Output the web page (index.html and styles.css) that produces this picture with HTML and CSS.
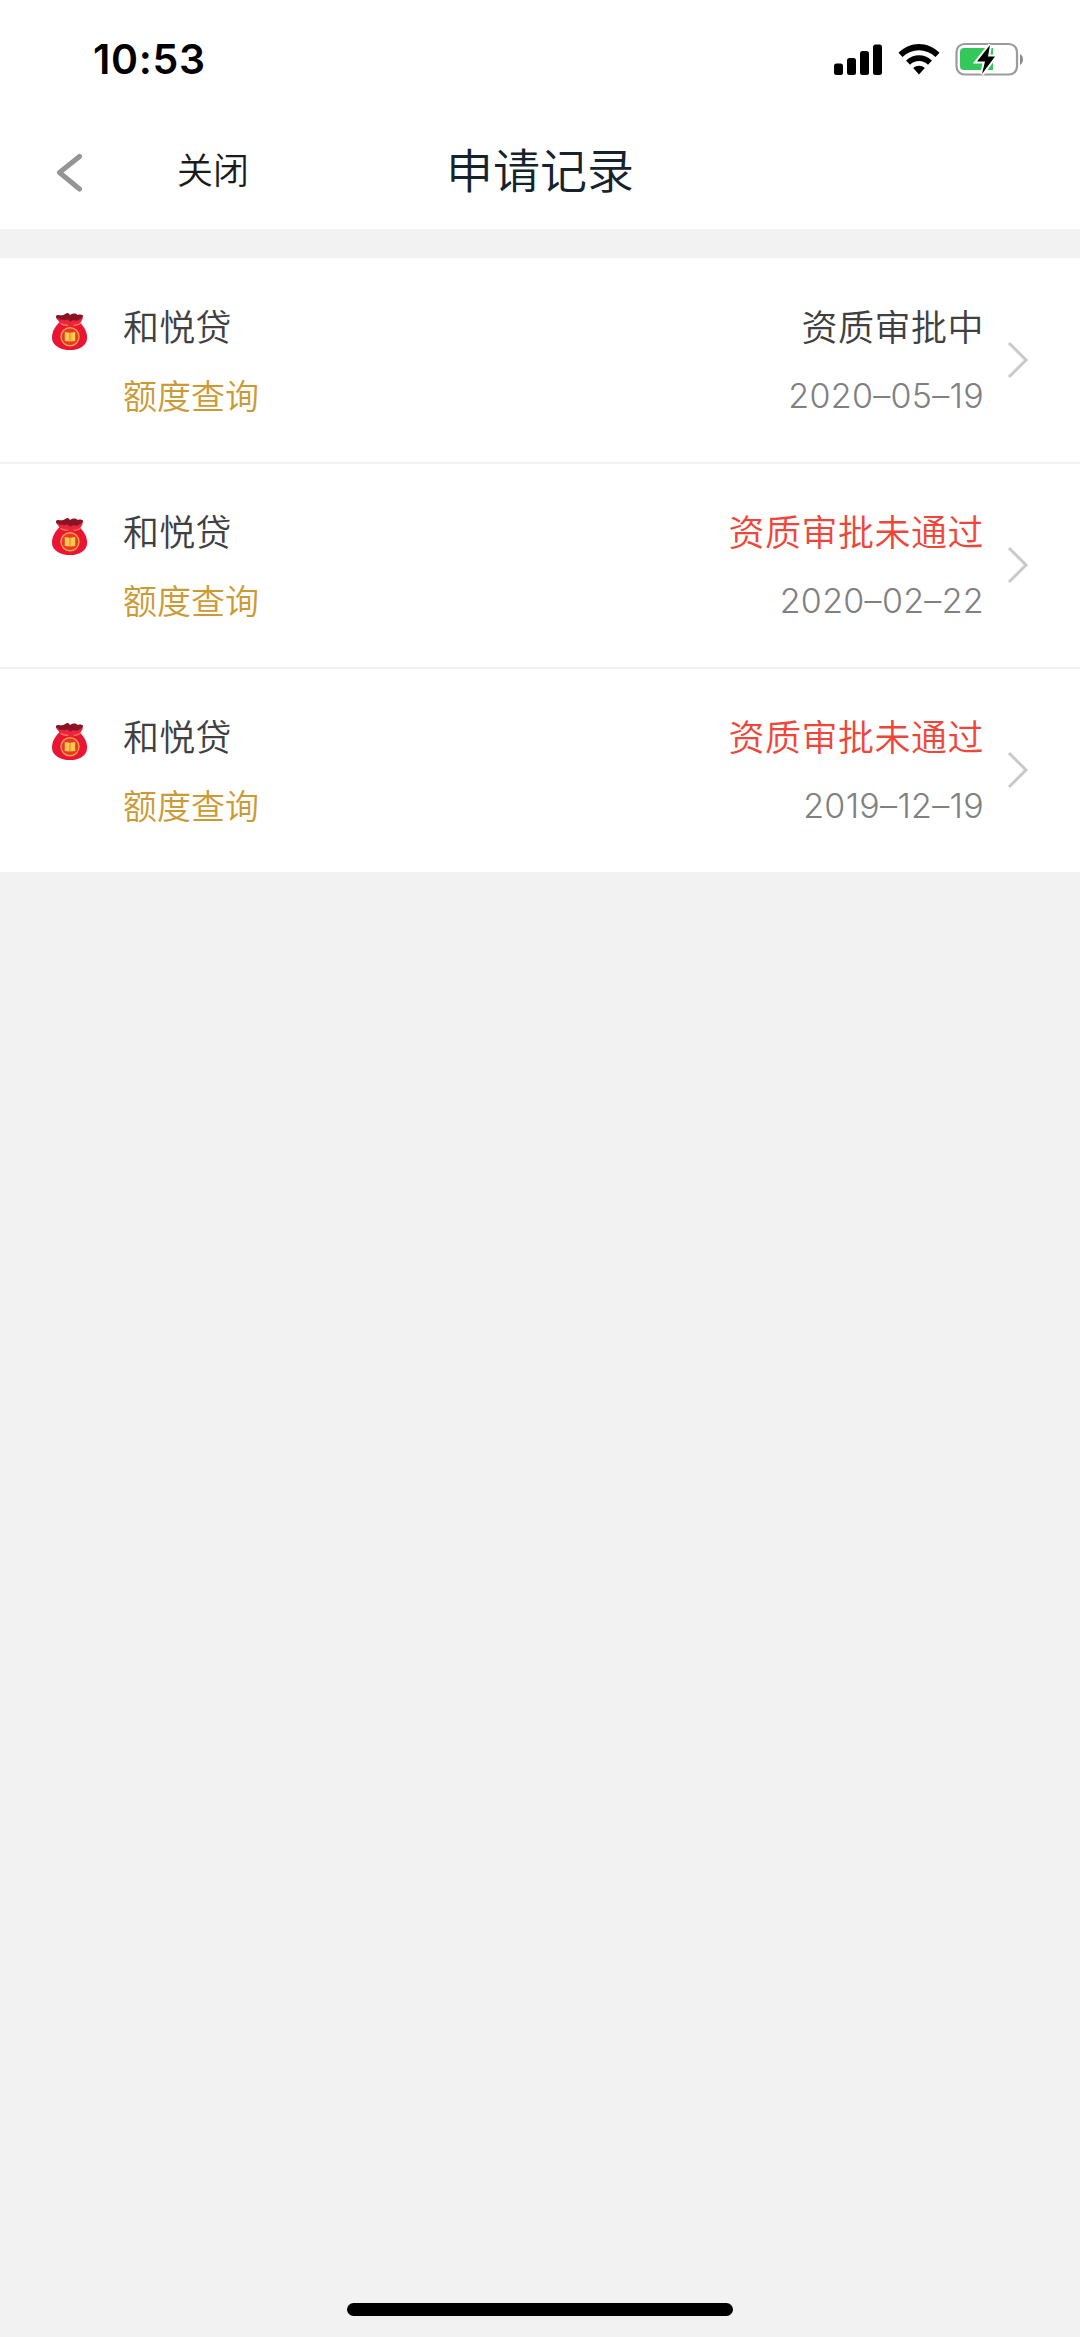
FILE: index.html
```html
<!DOCTYPE html>
<html lang="zh-CN">
<head>
<meta charset="utf-8">
<title>申请记录</title>
<link rel="stylesheet" href="styles.css">
</head>
<body>
<svg class="defs" aria-hidden="true">
  <symbol id="bag" viewBox="0 0 40 44">
    <path d="M10 11C4 16 1 22 1 28c0 8 9 13 19 13s18-5 18-13c0-6-3-12-9-17z" fill="#ea1535"/>
    <path d="M7 9C4 6 5 4 8 4c3 1 5 0 7-1 2-2 4-1 5 1 3-2 6-2 8 0 3-1 5 0 6 1-1 3-3 5-5 6-7 2-14 2-19 0z" fill="#8a1424"/>
    <path d="M6 6c3 5 6 2 8 4 3-3 5 1 7 1 3-3 5 0 7-1 2-2 4-1 6-4-1 4-3 6-5 9-5 2-13 2-18 0-2-3-4-5-5-9z" fill="#ee2340"/>
    <path d="M10 13c3 2 5 2 8 2M24 15c3 0 5-1 7-2" stroke="#f7844b" stroke-width="1.3" fill="none"/>
    <circle cx="20" cy="27" r="9.500" fill="#e8382c" stroke="#f2a33c" stroke-width="1.500"/>
    <path d="M14.500 22l5.200 .8v9.200l-5.200-.5zM25.500 22l-5.200 .8v9.200l5.200-.5z" fill="#ffc94a"/>
  </symbol>
  <symbol id="chevron" viewBox="0 0 22 38">
    <path d="M2 2l17 17L2 36" fill="none" stroke="#c9c9cb" stroke-width="3"/>
  </symbol>
</svg>
<header class="header">
  <div class="status">
    <span class="time">10:53</span>
    <div class="indicators">
      <svg class="signal" width="48" height="31" viewBox="0 0 48 31">
        <rect x="0" y="19.500" width="9" height="11.500" rx="2.500"/>
        <rect x="13" y="14" width="9" height="17" rx="2.500"/>
        <rect x="26" y="7" width="9" height="24" rx="2.500"/>
        <rect x="39" y="0.500" width="9" height="30.500" rx="2.500"/>
      </svg>
      <svg class="wifi" width="42" height="31" viewBox="0 0 42 31">
        <path d="M0.500 8.800C12-2.800 30-2.800 41.500 8.800L37.500 13C28 4 14 4 4.500 13z"/>
        <path d="M8 16.500c7.500-7 18.500-7 26 0L30 20.800c-5-5-13-5-18 0z"/>
        <path d="M15.200 24c3.500-3 8.100-3 11.600 0L21 30.500z"/>
      </svg>
      <svg class="battery" width="70" height="34" viewBox="0 0 70 34">
        <rect x="1.500" y="2" width="60.500" height="30.500" rx="8" fill="#fff" stroke="#9b9b9b" stroke-width="2.200"/>
        <path d="M65 12c4 2 4 9 0 11z" fill="#8c8c8c"/>
        <path d="M9 6h29v22H9c-2.500 0-4-1.500-4-4V10c0-2.500 1.500-4 4-4z" fill="#34c759"/>
        <path d="M35 3L22 19.500h8L27 32l13-17.500h-7z" stroke="#fff" stroke-width="4"/>
        <path d="M35 3L22 19.500h8L27 32l13-17.500h-7z"/>
      </svg>
    </div>
  </div>
  <nav class="nav">
    <div class="left">
      <svg class="back" width="28" height="40" viewBox="0 0 28 40"><path d="M24.500 3.500L4.500 19.500l20 16.500" fill="none" stroke="#949494" stroke-width="5" stroke-linecap="round" stroke-linejoin="round"/></svg>
      <span class="close">关闭</span>
    </div>
    <h1 class="title">申请记录</h1>
    <span></span>
  </nav>
</header>
<main class="list">
  <article class="row">
    <svg class="bag"><use href="#bag"/></svg>
    <div class="product"><span class="name">和悦贷</span><span class="kind">额度查询</span></div>
    <div class="result"><span class="state">资质审批中</span><span class="date">2020–05–19</span></div>
    <svg class="arrow"><use href="#chevron"/></svg>
  </article>
  <article class="row">
    <svg class="bag"><use href="#bag"/></svg>
    <div class="product"><span class="name">和悦贷</span><span class="kind">额度查询</span></div>
    <div class="result"><span class="state failed">资质审批未通过</span><span class="date">2020–02–22</span></div>
    <svg class="arrow"><use href="#chevron"/></svg>
  </article>
  <article class="row">
    <svg class="bag"><use href="#bag"/></svg>
    <div class="product"><span class="name">和悦贷</span><span class="kind">额度查询</span></div>
    <div class="result"><span class="state failed">资质审批未通过</span><span class="date">2019–12–19</span></div>
    <svg class="arrow"><use href="#chevron"/></svg>
  </article>
</main>
<footer class="home"><div class="home-bar"></div></footer>
</body>
</html>
```
FILE: styles.css
```css
* { box-sizing: border-box; }
body {
  margin: 0;
  width: 1080px;
  height: 2337px;
  display: flex;
  flex-direction: column;
  background: #f2f2f2;
  font-family: "Noto Sans CJK SC", sans-serif;
  font-weight: 350;
}
.defs { display: none; }
.header { height: 229px; background: #fff; }
.status {
  height: 118px;
  padding: 0 55px 0 93px;
  display: flex;
  justify-content: space-between;
  align-items: center;
}
.time {
  font: 600 41px/50px Inter, sans-serif;
  letter-spacing: 0.7px;
}
.indicators { display: flex; align-items: center; gap: 16px; }
.battery { margin-left: -1px; }
.nav {
  height: 111px;
  display: grid;
  grid-template-columns: 1fr auto 1fr;
  align-items: start;
}
.left { display: flex; padding-left: 55px; }
.back { margin-top: 35px; }
.close {
  margin: 25px 0 0 94px;
  font-size: 36px;
  line-height: 50px;
  color: #1b1b1b;
}
.title {
  margin: 17px 0 0;
  font-size: 47px;
  font-weight: 350;
  line-height: 66px;
  color: #14232c;
}
.list { margin-top: 29px; padding-top: 1px; background: #fff; }
.row {
  height: 205px;
  padding: 0 51px;
  display: flex;
  border-bottom: 2px solid #f2f2f2;
}
.bag { width: 38px; height: 42px; margin: 52px 0 0; }
.product { margin: 39px 0 0 34px; display: flex; flex-direction: column; }
.result { margin: 39px 23px 0 auto; display: flex; flex-direction: column; align-items: flex-end; }
.name, .state { font-size: 36px; line-height: 54px; letter-spacing: 0.2px; color: #404040; }
.state { letter-spacing: 0.5px; }
.state.failed { color: #f0463a; }
.kind { margin-top: 19px; font-size: 34px; line-height: 48px; color: #cb9a36; }
.date {
  margin-top: 20px;
  font: 300 34px/48px Inter, sans-serif;
  letter-spacing: 0.3px;
  color: #808080;
}
.arrow { width: 22px; height: 38px; margin-top: 82px; }
.home { margin-top: auto; height: 34px; display: flex; justify-content: center; }
.home-bar { width: 386px; height: 13px; border-radius: 7px; background: #000; }
```
